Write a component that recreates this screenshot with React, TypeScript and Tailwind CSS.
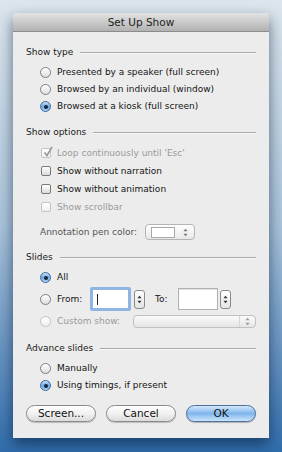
import React from 'react';

function Radio({ checked = false, disabled = false }: { checked?: boolean; disabled?: boolean }) {
  if (checked) {
    return (
      <span className="relative flex h-[11px] w-[11px] shrink-0 items-center justify-center rounded-full border border-[#3f6795] bg-gradient-to-b from-[#c9e0f7] via-[#6ea9e6] to-[#a9d1f6]">
        <span className="h-[4px] w-[4px] rounded-full bg-[#17253a]" />
      </span>
    );
  }
  return (
    <span
      className={
        disabled
          ? 'h-[11px] w-[11px] shrink-0 rounded-full border border-[#c2c2c2] bg-gradient-to-b from-white to-[#efefef]'
          : 'h-[11px] w-[11px] shrink-0 rounded-full border border-[#7f7f7f] bg-gradient-to-b from-white to-[#dedede]'
      }
    />
  );
}

function Check({ checked = false, disabled = false }: { checked?: boolean; disabled?: boolean }) {
  return (
    <span
      className={
        disabled
          ? 'relative h-[10px] w-[10px] shrink-0 rounded-[2px] border border-[#c4c4c4] bg-gradient-to-b from-white to-[#efefef]'
          : 'relative h-[10px] w-[10px] shrink-0 rounded-[2px] border border-[#7a7a7a] bg-gradient-to-b from-white to-[#dcdcdc]'
      }
    >
      {checked && (
        <svg viewBox="0 0 12 12" className="absolute -top-[3px] left-[0px] h-[12px] w-[12px]">
          <path d="M2.5 6.5 L5 9.5 L10 1" fill="none" stroke="#9a9a9a" strokeWidth="1.6" />
        </svg>
      )}
    </span>
  );
}

function Heading({ children }: { children: React.ReactNode }) {
  return (
    <div className="flex h-[14px] items-center gap-[7px] text-[#1a1a1a]">
      <span className="whitespace-nowrap">{children}</span>
      <span className="h-px flex-1 bg-[#a9a9a9] shadow-[0_1px_0_#f8f8f8]" />
    </div>
  );
}

function Arrows({ color = '#555' }: { color?: string }) {
  return (
    <svg viewBox="0 0 6 10" className="h-[9px] w-[5px]">
      <path d="M3 0.5 L5.5 3.5 L0.5 3.5 Z" fill={color} />
      <path d="M3 9.5 L5.5 6.5 L0.5 6.5 Z" fill={color} />
    </svg>
  );
}

function Stepper() {
  return (
    <span className="flex h-[19px] w-[11px] shrink-0 items-center justify-center rounded-[3px] border border-[#8a8a8a] bg-gradient-to-b from-white to-[#e4e4e4]">
      <Arrows color="#333" />
    </span>
  );
}

function Button({ children, primary = false }: { children: React.ReactNode; primary?: boolean }) {
  return (
    <div
      className={
        primary
          ? 'flex h-[17px] w-[70px] items-center justify-center rounded-full border border-[#4d6f9c] bg-gradient-to-b from-[#d5e8fb] via-[#7fb5ec] to-[#cbe5fc] text-[10.5px] text-[#111] shadow-[0_1px_1px_rgba(0,0,0,0.25)]'
          : 'flex h-[17px] w-[70px] items-center justify-center rounded-full border border-[#8a8a8a] bg-gradient-to-b from-white via-[#f1f1f1] to-[#dcdcdc] text-[10.5px] text-[#111] shadow-[0_1px_1px_rgba(0,0,0,0.2)]'
      }
    >
      {children}
    </div>
  );
}

export default function App() {
  return (
    <div className="h-[452px] w-[282px] overflow-hidden bg-gradient-to-b from-[#dbe5ec] via-[#a9c3da] to-[#2f6dab] pl-[13px] pt-[13px] font-['DejaVu_Sans',sans-serif] text-[9px] leading-none">
      <div className="w-[256px] overflow-hidden rounded-t-[4px] bg-[#ececec] shadow-[0_6px_14px_rgba(0,20,50,0.55)]">
        {/* title bar */}
        <div className="flex h-[19px] items-center justify-center border-b border-[#8c8c8c] bg-gradient-to-b from-[#e3e3e3] to-[#b2b2b2] text-[10.5px] text-[#1d1d1d]">
          Set Up Show
        </div>

        <div className="px-[13px] pb-[16px] pt-[13px] text-[#141414]">
          <Heading>Show type</Heading>
          <div className="mt-[5px]">
            <div className="flex h-[17px] items-center gap-[6px] pl-[14px]">
              <Radio />
              <span>Presented by a speaker (full screen)</span>
            </div>
            <div className="flex h-[17px] items-center gap-[6px] pl-[14px]">
              <Radio />
              <span>Browsed by an individual (window)</span>
            </div>
            <div className="flex h-[17px] items-center gap-[6px] pl-[14px]">
              <Radio checked />
              <span>Browsed at a kiosk (full screen)</span>
            </div>
          </div>

          <div className="mt-[10px]">
            <Heading>Show options</Heading>
          </div>
          <div className="mt-[5px]">
            <div className="flex h-[18px] items-center gap-[6px] pl-[15px] text-[#9a9a9a]">
              <Check checked disabled />
              <span>Loop continuously until 'Esc'</span>
            </div>
            <div className="flex h-[18px] items-center gap-[6px] pl-[15px]">
              <Check />
              <span>Show without narration</span>
            </div>
            <div className="flex h-[18px] items-center gap-[6px] pl-[15px]">
              <Check />
              <span>Show without animation</span>
            </div>
            <div className="flex h-[18px] items-center gap-[6px] pl-[15px] text-[#9a9a9a]">
              <Check disabled />
              <span>Show scrollbar</span>
            </div>
          </div>
          <div className="mt-[7px] flex h-[18px] items-center pl-[14px] text-[#555]">
            <span className="w-[105px]">Annotation pen color:</span>
            <span className="flex h-[16px] w-[50px] items-center rounded-[4px] border border-[#b4b4b4] bg-gradient-to-b from-white to-[#e8e8e8] pl-[5px] pr-[6px]">
              <span className="h-[11px] w-[24px] border border-[#a8a8a8] bg-white" />
              <span className="ml-auto flex items-center">
                <Arrows color="#777" />
              </span>
            </span>
          </div>

          <div className="mt-[9px]">
            <Heading>Slides</Heading>
          </div>
          <div className="mt-[5px] flex h-[17px] items-center gap-[6px] pl-[14px]">
            <Radio checked />
            <span>All</span>
          </div>
          <div className="mt-[1px] flex h-[24px] items-center pl-[14px]">
            <Radio />
            <span className="ml-[6px] w-[33px]">From:</span>
            <span className="flex h-[24px] w-[41px] items-center rounded-[2px] border-[3px] border-[#8fb6e2] bg-white pl-[4px]">
              <span className="h-[11px] w-px bg-[#222]" />
            </span>
            <span className="ml-[3px]">
              <Stepper />
            </span>
            <span className="ml-[10px] w-[23px]">To:</span>
            <span className="h-[22px] w-[40px] border border-[#b0b0b0] bg-white shadow-[inset_0_1px_1px_rgba(0,0,0,0.12)]" />
            <span className="ml-[2px]">
              <Stepper />
            </span>
          </div>
          <div className="mt-[2px] flex h-[17px] items-center pl-[14px] text-[#9a9a9a]">
            <Radio disabled />
            <span className="ml-[6px] w-[76px]">Custom show:</span>
            <span className="flex h-[13px] flex-1 items-center justify-end rounded-[4px] border border-[#c0c0c0] bg-gradient-to-b from-[#fafafa] to-[#e6e6e6] pr-[5px]">
              <span className="mr-[5px] h-full w-px bg-[#d6d6d6]" />
              <Arrows color="#9a9a9a" />
            </span>
          </div>

          <div className="mt-[11px]">
            <Heading>Advance slides</Heading>
          </div>
          <div className="mt-[5px]">
            <div className="flex h-[17px] items-center gap-[6px] pl-[14px]">
              <Radio />
              <span>Manually</span>
            </div>
            <div className="flex h-[17px] items-center gap-[6px] pl-[14px]">
              <Radio checked />
              <span>Using timings, if present</span>
            </div>
          </div>

          <div className="mt-[11px] flex gap-[10px]">
            <Button>Screen...</Button>
            <Button>Cancel</Button>
            <Button primary>OK</Button>
          </div>
        </div>
      </div>
    </div>
  );
}
